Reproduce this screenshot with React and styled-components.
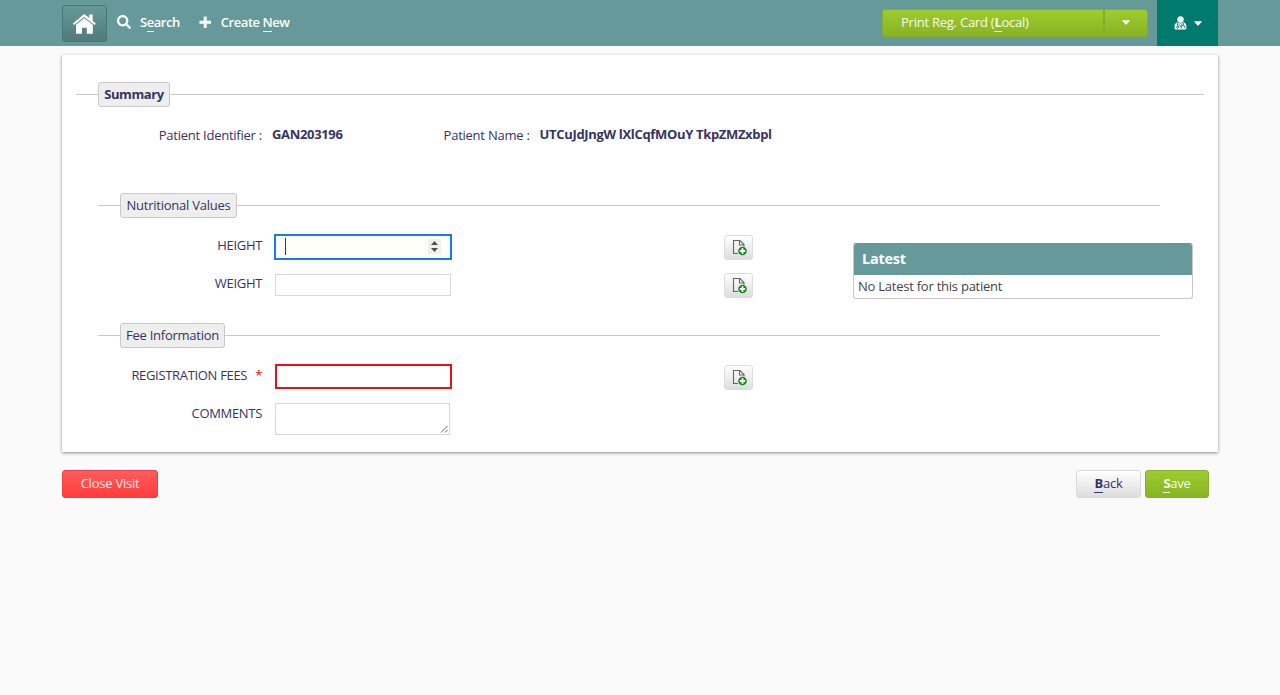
import React from 'react';
import styled, { createGlobalStyle, css } from 'styled-components';
import { FaSearch } from 'react-icons/fa';

const GlobalStyle = createGlobalStyle`
  * { box-sizing: border-box; }
  body {
    margin: 0;
    background: #fafafa;
    color: #363463;
    font: 13px/20px "Open Sans", sans-serif;
    letter-spacing: -0.24px;
  }
`;

const Header = styled.header`
  height: 46px;
  background: #669999;
  display: flex;
  align-items: flex-start;
  padding: 0 62px;
`;

const HomeButton = styled.a`
  width: 45px;
  height: 37px;
  margin: 5px 10px 0 0;
  border: 1px solid #4a7575;
  border-radius: 3px;
  background: linear-gradient(#669999, #527a7a);
  display: flex;
  align-items: center;
  justify-content: center;
`;

const NavLink = styled.a`
  height: 44px;
  display: flex;
  align-items: center;
  color: #fff;
  font-weight: 600;
  letter-spacing: -0.45px;
  margin-right: 19px;
  svg { flex: none; margin-right: 9px; }
`;

const AccessKey = styled.span`
  font-weight: ${(p) => (p.$bold ? 700 : 'inherit')};
  display: inline-block;
  line-height: 17px;
  border-bottom: 1px solid currentColor;
`;

const Spacer = styled.div`
  flex: 1;
`;

const green = css`
  color: #f6fbe9;
  border: 1px solid #86ad2b;
  background: linear-gradient(#9dcc2e, #88b325);
`;

const PrintGroup = styled.div`
  display: flex;
  margin: 9px 9px 0 0;
  height: 28px;
`;

const PrintButton = styled.a`
  ${green}
  width: 222px;
  padding-left: 18px;
  line-height: 25px;
  border-radius: 3px 0 0 3px;
`;

const PrintToggle = styled.a`
  ${green}
  width: 44px;
  padding-bottom: 1px;
  border-radius: 0 3px 3px 0;
  display: flex;
  align-items: center;
  justify-content: center;
`;

const UserMenu = styled.div`
  width: 61px;
  height: 46px;
  background: #007a6c;
  display: flex;
  align-items: center;
  justify-content: center;
  gap: 7px;
`;

const Card = styled.main`
  margin: 9px 62px 0;
  height: 397px;
  padding: 27px 14px 0;
  background: #fff;
  box-shadow: 0 1px 3px rgba(0, 0, 0, 0.45);
`;

const Heading = styled.div`
  display: flex;
  align-items: center;
  height: 25px;
  margin-right: ${(p) => p.$right || 0}px;
  &::before, &::after { content: ''; height: 1px; background: #c9cac5; }
  &::before { width: 22px; }
  &::after { flex: 1; }
`;

const Legend = styled.h2`
  margin: 0;
  width: ${(p) => p.$width}px;
  height: 25px;
  border: 1px solid #c9c9c9;
  border-radius: 3px;
  background: #eee;
  text-align: center;
  white-space: nowrap;
  font-size: 13px;
  line-height: 23px;
  font-weight: ${(p) => (p.$bold ? 700 : 400)};
  letter-spacing: ${(p) => (p.$bold ? '-0.4px' : 'inherit')};
`;

const Summary = styled.div`
  display: flex;
  height: 86px;
  padding-top: 18px;
`;

const SummaryLabel = styled.span`
  width: ${(p) => p.$width}px;
  margin-right: 10px;
  text-align: right;
`;

const SummaryValue = styled.strong`
  line-height: 18px;
  white-space: nowrap;
  letter-spacing: -0.33px;
`;

const Sections = styled.div`
  padding-left: 22px;
`;

const SectionBody = styled.div`
  display: flex;
  height: ${(p) => p.$height}px;
  padding-top: 9px;
`;

const Fields = styled.div`
  width: 655px;
`;

const Row = styled.div`
  height: 38px;
  display: flex;
  align-items: flex-start;
`;

const Label = styled.label`
  width: 164px;
  margin-right: 13px;
  padding-top: 8px;
  text-align: right;
  letter-spacing: -0.32px;
`;

const Required = styled.span`
  color: #f00;
  margin-left: 8px;
`;

const NumberField = styled.div`
  width: 177px;
  height: 25px;
  margin: 7px 272px 0 0;
  display: flex;
  align-items: center;
  justify-content: space-between;
  border: 2px solid #ec1015;
  background: #fff;
  ${(p) => p.$state === 'plain' && css`
    width: 176px;
    height: 22px;
    margin: 9px 273px 0 0;
    border: 1px solid #d8d8d8;
  `}
  ${(p) => p.$state === 'focus' && css`
    width: 178px;
    height: 26px;
    margin-left: -1px;
    border-color: #1a7be6;
    background: #fffffa;
    padding: 0 9px 1px 9px;
  `}
`;

const Caret = styled.i`
  width: 1px;
  height: 17px;
  background: #363463;
`;

const Spinner = styled.span`
  width: 13px;
  height: 15px;
  background: #efefef;
  svg { display: block; }
`;

const Comments = styled.div`
  width: 175px;
  height: 32px;
  margin-top: 8px;
  border: 1px solid #d8d8d8;
  display: flex;
  align-items: flex-end;
  justify-content: flex-end;
  padding: 1px;
`;

const AddNote = styled.button`
  width: 29px;
  height: 25px;
  margin: 8px 0 0;
  padding: 0 0 0 1px;
  border: 1px solid #ddd;
  border-radius: 3px;
  background: linear-gradient(#fff, #ddd);
  display: flex;
  align-items: center;
  justify-content: center;
`;

const Panel = styled.aside`
  width: 340px;
  height: 56px;
  margin: 16px 0 0 100px;
  border: 1px solid #c9c9c9;
  border-top-color: #669999;
  border-radius: 3px;
  overflow: hidden;
  color: #444;
  p { margin: 0; padding-left: 4px; line-height: 22px; }
`;

const PanelTitle = styled.h3`
  margin: 0 -1px;
  height: 31px;
  padding-left: 9px;
  background: #669999;
  color: #fff;
  font-size: 14.5px;
  line-height: 29px;
  font-weight: 700;
`;

const Actions = styled.footer`
  display: flex;
  gap: 4px;
  padding: 18px 71px 0 62px;
`;

const tones = {
  danger: css`color: #ffe9e9; border: 1px solid #ec4247; background: linear-gradient(#ff5c5c, #ff3d3d);`,
  plain: css`color: #363463; border: 1px solid #d9d9d9; background: linear-gradient(#fff, #ddd);`,
  confirm: green,
};

const Action = styled.a`
  width: ${(p) => p.$width}px;
  height: 28px;
  border-radius: 3px;
  text-align: center;
  line-height: 25px;
  ${(p) => tones[p.$tone]}
`;

const Down = () => (
  <svg width="8" height="5" viewBox="0 0 8 5"><path d="M.6.2h6.800q.6.2.2.8L4.400 4.600q-.4.4-.8 0L.4 1Q0 .4.6.2z" fill="#fff" /></svg>
);

const Plus = () => (
  <svg width="13" height="13" viewBox="0 0 13 13" fill="#fff"><path d="M4.700.5h3v4.200h4.300v3H7.700V12h-3V7.700H.5v-3h4.200z" /></svg>
);

const Home = () => (
  <svg width="25" height="22" viewBox="0 0 25 22" fill="#fff">
    <path d="M12.200 1 .8 10.500l1.300 1.600L12.200 3.900l10.300 8.200 1.300-1.600-3.100-2.600V1.400h-3.400v3.700z" />
    <path d="M12.200 5.200 4 11.800v9h6v-6h4.800v6h6v-9z" />
  </svg>
);

const Doctor = () => (
  <svg width="13" height="14" viewBox="0 0 13 14" fill="none">
    <circle cx="6.500" cy="3.500" r="3.200" fill="#fff" />
    <path d="M3.400 6.300C1 7 .5 9 .5 11.500.5 13 1.200 13.600 2.500 13.600h8c1.300 0 2-.6 2-2.100 0-2.500-.5-4.500-2.900-5.200C8 7.800 5 7.800 3.400 6.300z" fill="#fff" />
    <path d="M3.700 6.800v3.400M9.200 7v2.300M7.400 12.300v-1.300c0-2.200 3.500-2.200 3.500 0v1.300" stroke="#007a6c" />
    <circle cx="3.700" cy="11.200" r="1" stroke="#007a6c" strokeWidth=".9" />
    <path d="M5.200 8.200 6.500 11 7.700 8.200" stroke="#007a6c" strokeWidth=".7" />
  </svg>
);

const NoteButton = () => (
  <AddNote aria-label="Add note">
    <svg width="17" height="17" viewBox="0 0 17 17" fill="none">
      <path d="M7 14.500H2.500v-13H9l4 4v2M8.500 1.500V6H13" stroke="#666" strokeWidth="1.100" />
      <circle cx="11.500" cy="12" r="4.300" fill="#168a1c" />
      <path d="M11.500 9.300v5.400M8.800 12h5.400" stroke="#fff" strokeWidth="1.900" />
    </svg>
  </AddNote>
);

const Field = ({ label, required, state, children }) => (
  <Row>
    <Label>{label}{required && <Required>*</Required>}</Label>
    <NumberField $state={state}>{children}</NumberField>
    <NoteButton />
  </Row>
);

export default function App() {
  return (
    <>
      <GlobalStyle />
      <Header>
        <HomeButton><Home /></HomeButton>
        <NavLink><FaSearch size={14} /><span>S<AccessKey>e</AccessKey>arch</span></NavLink>
        <NavLink><Plus /><span>Create <AccessKey>N</AccessKey>ew</span></NavLink>
        <Spacer />
        <PrintGroup>
          <PrintButton>Print Reg. Card (<AccessKey $bold>L</AccessKey>ocal)</PrintButton>
          <PrintToggle><Down /></PrintToggle>
        </PrintGroup>
        <UserMenu><Doctor /><Down /></UserMenu>
      </Header>
      <Card>
        <Heading><Legend $width={72} $bold>Summary</Legend></Heading>
        <Summary>
          <SummaryLabel $width={186}>Patient Identifier :</SummaryLabel>
          <SummaryValue>GAN203196</SummaryValue>
          <SummaryLabel $width={187}>Patient Name :</SummaryLabel>
          <SummaryValue>UTCuJdJngW lXlCqfMOuY TkpZMZxbpl</SummaryValue>
        </Summary>
        <Sections>
          <Heading $right={44}><Legend $width={117}>Nutritional Values</Legend></Heading>
          <SectionBody $height={105}>
            <Fields>
              <Field label="HEIGHT" state="focus">
                <Caret />
                <Spinner>
                  <svg width="13" height="15" viewBox="0 0 13 15"><path d="M3 6 6.500 2 10 6zM3 9h7l-3.500 4z" fill="#505050" /></svg>
                </Spinner>
              </Field>
              <Field label="WEIGHT" state="plain" />
            </Fields>
            <Panel>
              <PanelTitle>Latest</PanelTitle>
              <p>No Latest for this patient</p>
            </Panel>
          </SectionBody>
          <Heading $right={44}><Legend $width={105}>Fee Information</Legend></Heading>
          <SectionBody $height={104}>
            <Fields>
              <Field label="REGISTRATION FEES" required />
              <Row>
                <Label>COMMENTS</Label>
                <Comments>
                  <svg width="8" height="8" viewBox="0 0 8 8"><path d="M1 7.500 7.500 1M5 7.500 7.500 5" stroke="#666" /></svg>
                </Comments>
              </Row>
            </Fields>
          </SectionBody>
        </Sections>
      </Card>
      <Actions>
        <Action $tone="danger" $width={96}>Close Visit</Action>
        <Spacer />
        <Action $tone="plain" $width={65}><AccessKey $bold>B</AccessKey>ack</Action>
        <Action $tone="confirm" $width={64}><AccessKey $bold>S</AccessKey>ave</Action>
      </Actions>
    </>
  );
}
